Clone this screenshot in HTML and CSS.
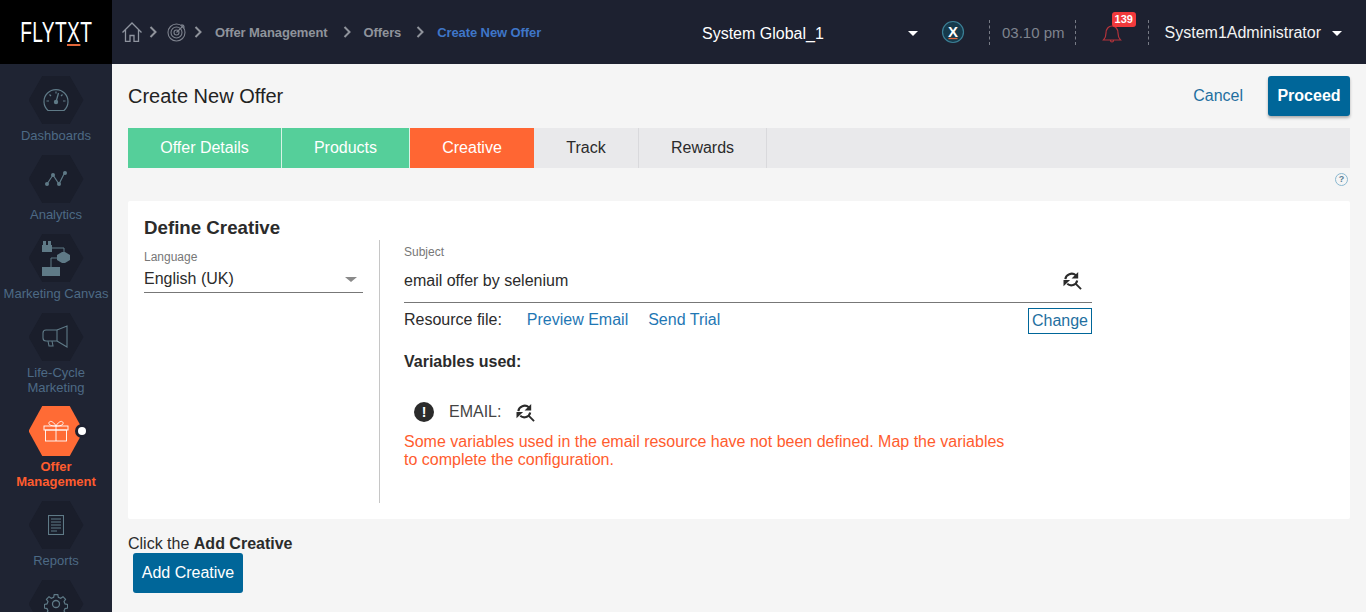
FILE: index.html
```html
<!DOCTYPE html>
<html lang="en">
<head>
<meta charset="utf-8">
<title>Create New Offer</title>
<link rel="stylesheet" href="styles.css">
</head>
<body>
<header class="topbar">
  <div class="logo"><span class="logo-text">FLYT<span class="logo-x">X</span>T</span></div>
  <nav class="crumbs">
    <svg class="ic-home" viewBox="0 0 20 20" width="20" height="20"><path d="M.5 10.500 10 1 19.500 10.500M3.500 8V19.500H8v-6h4v6h4.500V8" fill="none" stroke="#8f949f" stroke-width="1.300"/></svg>
    <svg class="chev chev-a" viewBox="0 0 8 12" width="8" height="12"><path d="M1.500 1 6.500 6l-5 5" fill="none" stroke="#8f939b" stroke-width="2"/></svg>
    <svg class="ic-target" viewBox="0 0 20 20" width="20" height="20"><g fill="none" stroke="#7d828d" stroke-width="1.100"><circle cx="9.500" cy="10.500" r="8.500"/><circle cx="9.500" cy="10.500" r="5.500"/><circle cx="9.500" cy="10.500" r="2.500"/><path d="M9.500 10.500 17 3M15 2v3h3"/></g></svg>
    <svg class="chev chev-b" viewBox="0 0 8 12" width="8" height="12"><path d="M1.500 1 6.500 6l-5 5" fill="none" stroke="#8f939b" stroke-width="2"/></svg>
    <span class="crumb crumb-om">Offer Management</span>
    <svg class="chev chev-c" viewBox="0 0 8 12" width="8" height="12"><path d="M1.500 1 6.500 6l-5 5" fill="none" stroke="#8f939b" stroke-width="2"/></svg>
    <span class="crumb crumb-of">Offers</span>
    <svg class="chev chev-c" viewBox="0 0 8 12" width="8" height="12"><path d="M1.500 1 6.500 6l-5 5" fill="none" stroke="#8f939b" stroke-width="2"/></svg>
    <span class="crumb crumb-cur">Create New Offer</span>
  </nav>
  <div class="top-right">
    <div class="sys">System Global_1</div>
    <span class="caret caret-sys"></span>
    <svg class="xbadge" viewBox="0 0 24 24" width="24" height="24"><circle cx="12" cy="12" r="10.500" fill="#163a4c" stroke="#3b7f95" stroke-width="1.200"/><text x="12" y="16.500" text-anchor="middle" class="xbadge-t">X</text><path d="M7.500 18.500h9" stroke="#e2673a" stroke-width="1.300"/></svg>
    <span class="dash"></span>
    <span class="clock">03.10 pm</span>
    <span class="dash"></span>
    <div class="bell">
      <svg viewBox="0 0 20 24" width="20" height="24"><path d="M1.500 18c2-2 2.500-4 2.500-7 0-4 2.500-7 6-7s6 3 6 7c0 3 .5 5 2.500 7zM8.500 18.500c0 2 3 2 3 0" fill="none" stroke="#b3333b" stroke-width="1.200"/></svg>
      <span class="badge">139</span>
    </div>
    <span class="dash"></span>
    <span class="user">System1Administrator</span>
    <span class="caret caret-user"></span>
  </div>
</header>
<div class="shell">
  <aside class="side">
    <div class="nav-item">
      <div class="hex"><svg viewBox="0 0 28 28" width="28" height="28"><g fill="none" stroke="#5f7a87" stroke-width="1.200"><path d="M6 24.500A12 12 0 1 1 22 24.500z"/><path d="M14 5.500v2M4.500 15h2.500M21 15h2.500M7.500 8.500l1.500 1.500M20.500 8.500 19 10"/></g><circle cx="14" cy="16" r="2.200" fill="#5f7a87"/><path d="M14 16 16.500 7" stroke="#5f7a87" stroke-width="1.300"/></svg></div>
      <div class="nav-label">Dashboards</div>
    </div>
    <div class="nav-item">
      <div class="hex"><svg viewBox="0 0 28 28" width="28" height="28"><path d="M5 19 11 10l6 9 6-12" fill="none" stroke="#5f7a87" stroke-width="1.200"/><g fill="#5f7a87"><circle cx="5" cy="19" r="2"/><circle cx="11" cy="10" r="2"/><circle cx="17" cy="19" r="2"/><circle cx="23" cy="8" r="2"/></g></svg></div>
      <div class="nav-label">Analytics</div>
    </div>
    <div class="nav-item">
      <div class="hex"><svg class="ic-canvas" viewBox="0 0 30 36" width="30" height="36"><g fill="#5f7a87"><rect x="1" y="5" width="10" height="7"/><rect x="2" y="1" width="3" height="4"/><rect x="7" y="1" width="3" height="4"/><path d="M16 15l5-3h3l5 3v5l-5 3h-3l-5-3z"/><rect x="1" y="27" width="18" height="9"/></g><path d="M11 8h12v4M16 18H10v9" fill="none" stroke="#5f7a87"/></svg></div>
      <div class="nav-label">Marketing Canvas</div>
    </div>
    <div class="nav-item tall">
      <div class="hex"><svg viewBox="0 0 28 24" width="28" height="24"><g fill="none" stroke="#5f7a87" stroke-width="1.100"><path d="M15 5H4a3 3 0 0 0-3 3v5a3 3 0 0 0 3 3h11z"/><path d="M15 5 25 1v21L15 16"/><path d="M6 16l1 5h4l-1-5"/></g></svg></div>
      <div class="nav-label">Life-Cycle<br>Marketing</div>
    </div>
    <div class="nav-item active">
      <div class="hex hex-on"><svg viewBox="0 0 26 22" width="26" height="22"><g fill="none" stroke="#fff" stroke-width=".9"><rect x="1" y="6" width="24" height="4"/><rect x="2.500" y="10" width="21" height="11"/><path d="M13 6v15M13 6c-3 0-8-.5-7-3.500C7 0 11 2 13 6c2-4 6-6 7-3.500C21 5.500 16 6 13 6z"/></g></svg></div>
      <span class="active-dot"></span>
      <div class="nav-label">Offer<br>Management</div>
    </div>
    <div class="nav-item">
      <div class="hex"><svg viewBox="0 0 16 20" width="16" height="20"><g fill="none" stroke="#5f7a87" stroke-width="1.100"><rect x=".5" y=".5" width="15" height="19"/><path d="M3 4h10M3 7h10M3 10h10M3 13h10M3 16h6"/></g></svg></div>
      <div class="nav-label">Reports</div>
    </div>
    <div class="nav-item">
      <div class="hex"><svg viewBox="0 0 24 24" width="24" height="24"><g fill="none" stroke="#5f7a87" stroke-width="1.300"><circle cx="12" cy="12" r="3.500"/><path d="M10 1.500h4l.6 3 2.600 1.100 2.600-1.700 2.800 2.800-1.700 2.600 1.100 2.600 2.900.6v4l-2.900.6-1.100 2.600 1.700 2.600-2.800 2.800-2.600-1.700-2.600 1.100-.6 2.900h-4l-.6-2.900-2.600-1.100-2.600 1.700-2.800-2.800 1.700-2.600-1.100-2.600-2.900-.6v-4l2.900-.6 1.100-2.600-1.700-2.600 2.800-2.800 2.600 1.700 2.600-1.100z" transform="translate(1.200 1.200) scale(.9)"/></g></svg></div>
    </div>
  </aside>
  <main class="main">
    <div class="title-row">
      <h1 class="title">Create New Offer</h1>
      <div class="actions">
        <a class="cancel">Cancel</a>
        <button class="btn btn-proceed">Proceed</button>
      </div>
    </div>
    <div class="tabs">
      <div class="tab done t1">Offer Details</div>
      <div class="tab done t2">Products</div>
      <div class="tab current t3">Creative</div>
      <div class="tab t4">Track</div>
      <div class="tab t5">Rewards</div>
    </div>
    <div class="help-row"><span class="help">?</span></div>
    <section class="card">
      <h2 class="card-title">Define Creative</h2>
      <div class="card-body">
        <div class="left-col">
          <div class="small-label">Language</div>
          <div class="select"><span>English (UK)</span><span class="caret-grey"></span></div>
        </div>
        <div class="right-col">
          <div class="small-label subj-label">Subject</div>
          <div class="subject">
            <span>email offer by selenium</span>
            <svg class="ic-search" viewBox="0 0 20 20" width="19" height="19"><use href="#refsearch"/></svg>
          </div>
          <div class="res-row">
            <span class="res-label">Resource file:</span>
            <a class="link">Preview Email</a>
            <a class="link">Send Trial</a>
            <a class="change">Change</a>
          </div>
          <div class="vars-title">Variables used:</div>
          <div class="email-row">
            <span class="alert">!</span>
            <span class="email-label">EMAIL:</span>
            <svg class="ic-search" viewBox="0 0 20 20" width="19" height="19"><use href="#refsearch"/></svg>
          </div>
          <p class="warn">Some variables used in the email resource have not been defined. Map the variables to complete the configuration.</p>
        </div>
      </div>
    </section>
    <div class="click-line">Click the <b>Add Creative</b></div>
    <button class="btn btn-add">Add Creative</button>
  </main>
</div>
<svg class="defs" width="0" height="0"><defs>
  <g id="refsearch">
    <path d="M2.500 8.500C3 3.500 9.500 1 13.500 4.500" fill="none" stroke="#2b2b2b" stroke-width="2.200"/>
    <path d="M16 1v7h-7z" fill="#2b2b2b"/>
    <path d="M15 10C14 15 8 16.500 4.500 13.500" fill="none" stroke="#2b2b2b" stroke-width="2.200"/>
    <path d="M.5 9.500h7l-7 6.500z" fill="#2b2b2b"/>
    <path d="M13 13l6 6" stroke="#2b2b2b" stroke-width="2"/>
  </g>
</defs></svg>
</body>
</html>
```
FILE: styles.css
```css
* { box-sizing: border-box; }
html, body { margin: 0; height: 612px; overflow: hidden; }
body { font-family: "Liberation Sans", Arial, sans-serif; background: #f5f5f5; color: #2b2b2b; font-size: 16px; }
.defs { display: block; height: 0; }

.topbar { height: 64px; background: #1d2130; display: flex; align-items: center; }
.logo { width: 112px; height: 64px; background: #000; display: flex; align-items: center; justify-content: center; flex: none; }
.logo-text { color: #fff; font-size: 30px; line-height: 30px; display: inline-block; white-space: nowrap; transform: scaleX(.64); letter-spacing: 0.5px; }
.logo-x { border-bottom: 2px solid #e2673a; display: inline-block; line-height: 25px; }
.crumbs { display: flex; align-items: center; width: 440px; flex: none; padding-left: 10px; color: #8f939b; }
.ic-home { margin-right: 7px; }
.chev-a { margin-right: 10px; }
.ic-target { margin-right: 7px; }
.chev-b { margin-right: 13px; }
.crumb { font-size: 13px; font-weight: 700; color: #8f939b; white-space: nowrap; padding-top: 1px; letter-spacing: -.1px; }
.chev-c { margin: 0 13px 0 15px; }
.crumb-cur { color: #3f76c8; }

.top-right { flex: 1; display: flex; align-items: center; color: #fff; padding-left: 150px; }
.sys { width: 206px; font-size: 16px; color: #fff; white-space: nowrap; padding-top: 4px; }
.caret { display: inline-block; width: 0; height: 0; border-left: 5px solid transparent; border-right: 5px solid transparent; border-top: 5px solid #fff; flex: none; margin-top: 3px; }
.caret-sys { margin-right: 23px; }
.xbadge { margin-right: 24px; flex: none; }
.xbadge-t { font: 700 15px "Liberation Sans", Arial, sans-serif; fill: #fff; }
.dash { width: 0; height: 25px; border-left: 1px dashed #777b85; flex: none; }
.clock { font-size: 15px; color: #7f848e; margin: 0 10px 0 12px; white-space: nowrap; padding-top: 1px; }
.bell { position: relative; width: 20px; height: 24px; margin: 4px 26px 0 26px; flex: none; }
.badge { position: absolute; left: 10px; top: -10px; background: #f23a3c; color: #fff; font-size: 11px; font-weight: 700; border-radius: 3px; padding: 0 3px; height: 15px; line-height: 15px; }
.user { font-size: 16px; margin-left: 16px; margin-right: 11px; white-space: nowrap; color: #f3f3f3; padding-top: 2px; }

.shell { display: flex; height: 548px; }
.side { width: 112px; background: #1f2433; flex: none; overflow: hidden; padding-top: 12px; }
.nav-item { display: flex; flex-direction: column; align-items: center; position: relative; height: 79px; }
.nav-item.tall { height: 93px; }
.nav-item.active { height: 95px; }
.hex { width: 55px; height: 48px; clip-path: polygon(25% 0, 75% 0, 100% 50%, 75% 100%, 25% 100%, 0 50%); background: #1a1e2b; display: flex; align-items: center; justify-content: center; flex: none; }
.hex svg { display: block; }
.hex-on { height: 50px; background: #ff6b35; }
.nav-label { font-size: 13px; line-height: 15px; color: #4d6a85; text-align: center; margin-top: 4px; white-space: nowrap; }
.active .nav-label { color: #ff5c2e; font-weight: 700; margin-top: 3px; }
.active-dot { position: absolute; left: 78px; top: 21px; width: 8px; height: 8px; background: #fff; border-radius: 50%; box-shadow: 0 0 0 3px #1d2130; }

.main { flex: 1; padding: 0 16px; min-width: 0; }
.title-row { height: 64px; display: flex; align-items: center; justify-content: space-between; }
.title { font-size: 20px; font-weight: 400; margin: 0; color: #222; }
.actions { display: flex; align-items: center; }
.cancel { color: #1f6f9f; font-size: 16px; margin-right: 25px; }
.btn { background: #006699; color: #fff; border: 0; font-family: inherit; border-radius: 3px; cursor: pointer; }
.btn-proceed { width: 82px; height: 40px; font-size: 16px; font-weight: 700; box-shadow: 0 2px 3px rgba(0,0,0,.3); }
.tabs { height: 40px; background: #e9e9eb; display: flex; }
.tab { height: 40px; display: flex; align-items: center; justify-content: center; font-size: 16px; border-right: 1px solid #d9d9dc; color: #2b2b2b; }
.t1 { width: 154px; } .t2 { width: 128px; } .t3 { width: 124px; } .t4 { width: 105px; } .t5 { width: 128px; }
.tab.done { background: #55cf9a; color: #fff; border-right-color: #d8f3e6; }
.tab.current { background: #ff6633; color: #fff; border-right: 0; }
.help-row { height: 33px; display: flex; justify-content: flex-end; padding: 5px 2px 0 0; }
.help { width: 13px; height: 13px; border: 1px solid #8ab8d0; border-radius: 50%; color: #5a7f95; font-size: 9px; font-weight: 700; line-height: 11px; text-align: center; }
.card { background: #fff; height: 318px; border-radius: 2px; padding: 16px 16px 16px; }
.card-title { font-size: 18.72px; line-height: 22px; font-weight: 700; margin: 0 0 1px; color: #2b2b2b; }
.card-body { display: flex; height: 263px; }
.left-col { width: 236px; flex: none; border-right: 1px solid #c6c6c6; padding: 10px 16px 0 0; }
.small-label { font-size: 12px; line-height: 14px; color: #777; }
.select { display: flex; justify-content: space-between; align-items: center; height: 29px; border-bottom: 1px solid #777; padding: 2px 6px 0 0; font-size: 16px; }
.caret-grey { width: 0; height: 0; border-left: 6px solid transparent; border-right: 6px solid transparent; border-top: 5px solid #8a8a8a; }
.right-col { width: 712px; padding: 5px 0 0 24px; flex: none; }
.subject { height: 40px; margin-top: 4px; border-bottom: 1px solid #777; display: flex; align-items: center; justify-content: space-between; padding: 0 10px 4px 0; font-size: 16px; }
.res-row { display: flex; align-items: flex-start; font-size: 16px; padding-top: 8px; position: relative; height: 45px; }
.res-label { margin-right: 25px; }
.link { color: #1f77b4; margin-right: 20px; }
.change { position: absolute; right: 0; top: 5px; border: 1px solid #006699; color: #1f6f9f; padding: 0 3px; height: 26px; line-height: 24px; }
.vars-title { font-weight: 700; font-size: 16px; line-height: 18px; margin-top: 5px; }
.email-row { display: flex; align-items: center; margin-top: 29px; padding-left: 10px; height: 24px; font-size: 16px; }
.alert { width: 20px; height: 20px; background: #2b2b2b; border-radius: 50%; color: #fff; font-weight: 700; font-size: 14px; text-align: center; line-height: 20px; margin-right: 15px; }
.email-label { margin-right: 15px; color: #444; }
.warn { color: #ff5c2e; font-size: 16px; line-height: 18px; margin: 9px 0 0; width: 610px; }
.click-line { font-size: 16px; margin-top: 16px; line-height: 18px; }
.btn-add { display: block; width: 110px; height: 40px; margin: 0 0 0 5px; font-size: 16px; }
```
